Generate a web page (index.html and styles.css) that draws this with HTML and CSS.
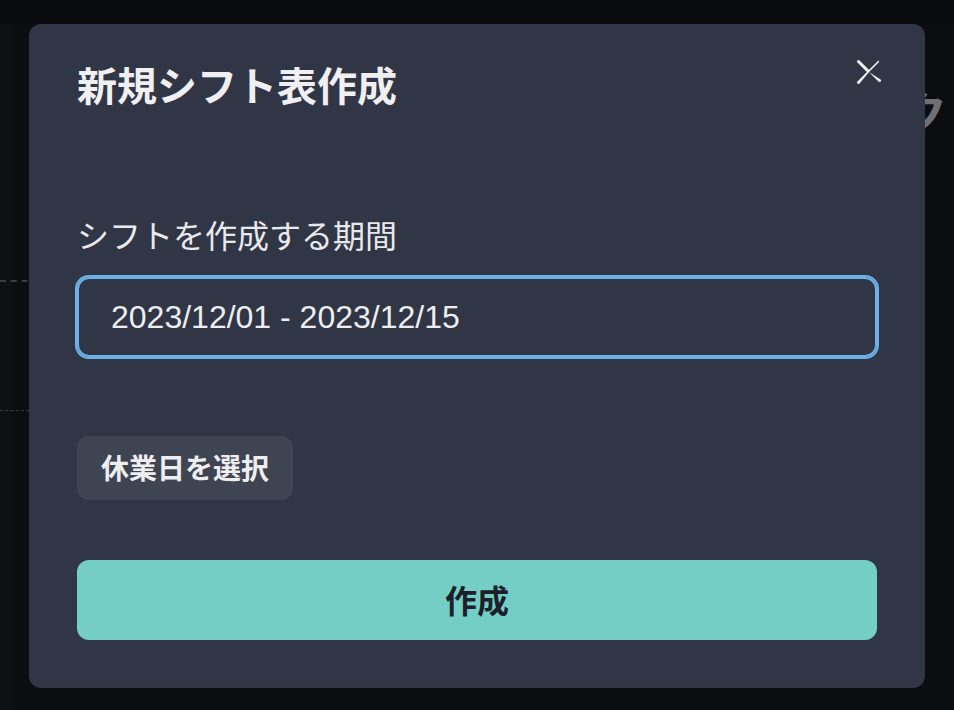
FILE: index.html
```html
<!DOCTYPE html>
<html lang="ja">
<head>
<meta charset="utf-8">
<title>新規シフト表作成</title>
<link rel="stylesheet" href="styles.css">
</head>
<body>
<div class="page">
  <div class="topbar"></div>
  <div class="page-main">
    <div class="page-heading">ク</div>
    <div class="grid-line grid-line-a"></div>
    <div class="grid-line grid-line-b"></div>
  </div>
</div>
<div class="overlay">
  <section class="modal">
    <header class="modal-header">新規シフト表作成</header>
    <button class="close-btn" aria-label="Close">
      <svg viewBox="0 0 24 24" width="24" height="24" aria-hidden="true">
        <path fill="currentColor" d="M.439,21.44a1.5,1.5,0,0,0,2.122,2.121L11.823,12.3a.25.25,0,0,1,.354,0l9.262,9.263a1.5,1.5,0,1,0,2.122-2.121L12.3,12.177a.25.25,0,0,1,0-.354l9.263-9.262A1.5,1.5,0,0,0,21.439.44L12.177,9.7a.25.25,0,0,1-.354,0L2.561.44A1.5,1.5,0,0,0,.439,2.561L9.7,11.823a.25.25,0,0,1,0,.354Z"/>
      </svg>
    </button>
    <div class="modal-body">
      <label class="field-label" for="period">シフトを作成する期間</label>
      <input id="period" class="field-input" type="text" value="2023/12/01 - 2023/12/15">
      <div class="holiday-row">
        <button class="btn-secondary">休業日を選択</button>
      </div>
    </div>
    <footer class="modal-footer">
      <button class="btn-primary">作成</button>
    </footer>
  </section>
</div>
</body>
</html>
```
FILE: styles.css
```css
* { box-sizing: border-box; }
html, body {
  margin: 0;
  padding: 0;
  width: 954px;
  height: 710px;
  overflow: hidden;
  background: #0d0e12;
  font-family: "Liberation Sans", "Noto Sans CJK JP", sans-serif;
}
.page {
  position: absolute;
  inset: 0;
  display: flex;
  flex-direction: column;
}
.topbar {
  height: 24px;
  background: #0a0b0e;
  flex: none;
}
.page-main {
  flex: 1;
  position: relative;
  background: linear-gradient(to right, #0e1014 0, #0e1014 12px, #0c0d11 12px, #0c0d11 100%);
}
.page-heading {
  text-align: right;
  padding: 63px 7px 0 0;
  font-family: "Noto Sans CJK JP", sans-serif;
  font-weight: 700;
  font-size: 46px;
  line-height: 46px;
  color: #6f7073;
}
.grid-line {
  position: absolute;
  left: 0;
  width: 60px;
  border-top: 2px dashed #3a3d44;
}
.grid-line-a { top: 256px; }
.grid-line-b { top: 386px; border-top-width: 1.5px; }

.overlay {
  position: absolute;
  inset: 0;
  display: flex;
  justify-content: center;
  align-items: flex-start;
  padding-top: 24px;
}
.modal {
  position: relative;
  width: 896px;
  height: 664px;
  background: #303646;
  border-radius: 12px;
  display: flex;
  flex-direction: column;
  color: #ececee;
}
.modal-header {
  padding: 30px 48px 34px;
  font-family: "Noto Sans CJK JP", sans-serif;
  font-size: 40px;
  font-weight: 700;
  line-height: 60px;
  color: #f0f0f2;
}
.close-btn {
  position: absolute;
  top: 16px;
  right: 24px;
  width: 64px;
  height: 64px;
  border: 0;
  padding: 0;
  background: transparent;
  color: #f4f4f6;
  display: flex;
  align-items: center;
  justify-content: center;
  border-radius: 12px;
}
.modal-body {
  padding: 62px 48px 0;
  display: flex;
  flex-direction: column;
}
.field-label {
  font-family: "Noto Sans CJK JP", sans-serif;
  font-size: 32px;
  line-height: 48px;
  font-weight: 400;
  color: #e9e9ec;
  margin-bottom: 19px;
}
.field-input {
  width: 800px;
  height: 80px;
  margin: 0;
  padding: 0 32px;
  border: 2px solid #6cb1e8;
  box-shadow: 0 0 0 2px #6cb1e8;
  border-radius: 12px;
  background: transparent;
  color: #eeeef0;
  font-family: "Liberation Sans", "Noto Sans CJK JP", sans-serif;
  font-size: 32px;
  outline: none;
}
.holiday-row {
  margin-top: 79px;
  display: flex;
}
.btn-secondary {
  height: 64px;
  padding: 0 24px 2px;
  border: 0;
  border-radius: 12px;
  background: #3e4452;
  color: #eeeef0;
  font-family: "Noto Sans CJK JP", sans-serif;
  font-size: 28px;
  font-weight: 700;
}
.modal-footer {
  padding: 60px 48px 48px;
  display: flex;
}
.btn-primary {
  width: 800px;
  height: 80px;
  padding: 0 0 2px;
  border: 0;
  border-radius: 12px;
  background: #75cec5;
  color: #1b202b;
  font-family: "Noto Sans CJK JP", sans-serif;
  font-size: 32px;
  font-weight: 700;
}
```
